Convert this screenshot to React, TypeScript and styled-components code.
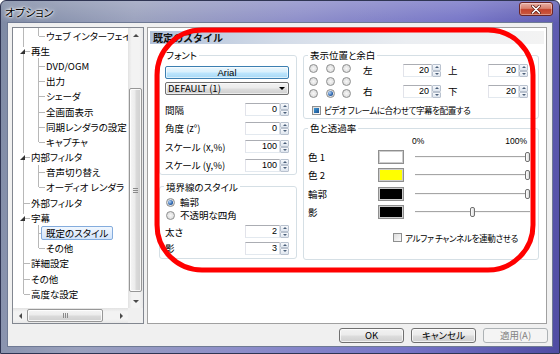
import React from "react";
import styled, { createGlobalStyle, css } from "styled-components";

const Global = createGlobalStyle`
  html, body { margin: 0; padding: 0; }
  body {
    width: 560px;
    height: 354px;
    overflow: hidden;
    background: #ffffff;
    font-family: "Noto Sans CJK JP", "Noto Sans", sans-serif;
    font-size: 9.5px;
    line-height: 1.2;
    font-feature-settings: "palt";
    color: #000;
  }
  *, *::before, *::after { box-sizing: border-box; }
`;

/* ---------- window frame ---------- */

const Window = styled.div`
  position: relative;
  width: 560px;
  height: 354px;
  display: flex;
  flex-direction: column;
  padding: 0 6px 6px 6px;
  border: 1px solid #2f3553;
  border-radius: 6px 6px 0 0;
  overflow: hidden;
  background:
    linear-gradient(180deg, rgba(255, 255, 255, 0.18) 0px, rgba(255, 255, 255, 0) 22px),
    linear-gradient(100deg, #7d89a3 0%, #9aa1bd 22%, #8d8ec9 48%, #7675c7 75%, #4f4ca3 100%);
`;

const TitleBar = styled.div`
  flex: none;
  height: 21px;
  display: flex;
  align-items: flex-start;
  justify-content: space-between;
`;

const Title = styled.div`
  margin-left: -2px;
  padding-top: 4px;
  font-size: 11px;
  line-height: 14px;
  color: #000;
  text-shadow: 0 0 6px #fff, 0 0 3px #fff, 0 0 2px #fff;
`;

const CloseButton = styled.div`
  margin-top: 1px;
  width: 34px;
  height: 14px;
  border: 1px solid #6b2525;
  border-radius: 3px;
  background: linear-gradient(180deg, #eab0a6 0%, #d9826f 45%, #c4432c 55%, #c95a40 100%);
  box-shadow: inset 0 0 0 1px rgba(255, 255, 255, 0.35);
  display: flex;
  align-items: center;
  justify-content: center;
`;

const Client = styled.div`
  flex: 1;
  display: flex;
  flex-direction: column;
  background: #f0f0f0;
  border: 1px solid #6f7a94;
  padding: 4px 5px 3px 4px;
`;

const Main = styled.div`
  height: 297px;
  display: flex;
  gap: 3px;
`;

/* ---------- tree ---------- */

const TreeBox = styled.div`
  width: 132px;
  flex: none;
  border: 1px solid #828790;
  background: #fff;
  display: grid;
  grid-template-columns: 1fr 15px;
  grid-template-rows: 1fr 15px;
  overflow: hidden;
`;

const TreeList = styled.div`
  overflow: hidden;
  padding-left: 3px;
`;

const TreeRow = styled.div`
  height: 15.2px;
  display: flex;
`;

type VLine = "full" | "top" | "none";

const Guide = styled.span<{ $v: VLine; $h?: boolean }>`
  position: relative;
  flex: none;
  width: 15px;
  &::before {
    content: "";
    position: absolute;
    left: 7px;
    top: 0;
    width: 0;
    height: ${(p) => (p.$v === "full" ? "100%" : p.$v === "top" ? "50%" : "0")};
    border-left: 1px solid #b8b8b8;
  }
  &::after {
    content: "";
    position: absolute;
    left: 8px;
    top: 50%;
    width: 6px;
    height: 0;
    border-top: 1px solid #b8b8b8;
    display: ${(p) => (p.$h ? "block" : "none")};
  }
`;

const Expander = styled.span`
  position: absolute;
  z-index: 1;
  left: 2px;
  top: 50%;
  margin-top: -4px;
  width: 7px;
  height: 7px;
  background: #fff;
  display: flex;
  align-items: flex-end;
  justify-content: flex-end;
  &::after {
    content: "";
    width: 0;
    height: 0;
    border-left: 5px solid transparent;
    border-bottom: 5px solid #333;
  }
`;

const NodeLabel = styled.span<{ $selected?: boolean }>`
  position: relative;
  z-index: 2;
  align-self: center;
  margin-left: -5px;
  padding: 0 4px;
  border: 1px solid transparent;
  border-radius: 2px;
  line-height: 12px;
  white-space: nowrap;
  ${(p) =>
    p.$selected &&
    css`
      border-color: #84acdd;
      background: linear-gradient(180deg, #f1f7fe 0%, #d2e4fb 100%);
    `}
`;

const VScroll = styled.div`
  display: flex;
  flex-direction: column;
  background: linear-gradient(90deg, #e2e2e2 0%, #f3f3f3 25%, #f3f3f3 75%, #e8e8e8 100%);
`;

const HScroll = styled.div`
  display: flex;
  background: linear-gradient(180deg, #e2e2e2 0%, #f3f3f3 25%, #f3f3f3 75%, #e8e8e8 100%);
`;

const ScrollCorner = styled.div`
  background: #f0f0f0;
`;

type Dir = "up" | "down" | "left" | "right";

const ArrowBox = styled.span<{ $dir: Dir }>`
  flex: none;
  width: ${(p) => (p.$dir === "left" || p.$dir === "right" ? "14px" : "auto")};
  height: ${(p) => (p.$dir === "up" || p.$dir === "down" ? "14px" : "auto")};
  display: flex;
  align-items: center;
  justify-content: center;
  &::after {
    content: "";
    width: 0;
    height: 0;
    ${(p) =>
      p.$dir === "up"
        ? css`border-left: 3px solid transparent; border-right: 3px solid transparent; border-bottom: 3px solid #4a4a4a;`
        : p.$dir === "down"
        ? css`border-left: 3px solid transparent; border-right: 3px solid transparent; border-top: 3px solid #4a4a4a;`
        : p.$dir === "left"
        ? css`border-top: 3px solid transparent; border-bottom: 3px solid transparent; border-right: 3px solid #4a4a4a;`
        : css`border-top: 3px solid transparent; border-bottom: 3px solid transparent; border-left: 3px solid #4a4a4a;`}
  }
`;

const VTrack = styled.div`
  flex: 1;
  display: flex;
  padding: 46px 1px 2px 1px;
`;

const HTrack = styled.div`
  flex: 1;
  display: flex;
  padding: 1px 11px 1px 0;
`;

const Thumb = styled.div<{ $vertical?: boolean }>`
  flex: 1;
  border: 1px solid #979797;
  border-radius: 2px;
  background: ${(p) =>
    p.$vertical
      ? "linear-gradient(90deg, #f5f5f5 0%, #ececec 45%, #dadada 55%, #d0d0d0 100%)"
      : "linear-gradient(180deg, #f5f5f5 0%, #ececec 45%, #dadada 55%, #d0d0d0 100%)"};
  box-shadow: inset 0 0 0 1px rgba(255, 255, 255, 0.8);
  display: flex;
  align-items: center;
  justify-content: center;
`;

const Grip = styled.span<{ $vertical?: boolean }>`
  display: flex;
  flex-direction: ${(p) => (p.$vertical ? "column" : "row")};
  gap: 1px;
  & > i {
    display: block;
    background: #8a8a8a;
    width: ${(p) => (p.$vertical ? "5px" : "1px")};
    height: ${(p) => (p.$vertical ? "1px" : "5px")};
  }
`;

/* ---------- right panel ---------- */

const Panel = styled.div`
  flex: 1;
  background: #fff;
  border: 1px solid #a0a0a0;
  display: flex;
  flex-direction: column;
  padding: 3px 2px 0 2px;
`;

const PageHeader = styled.div`
  height: 13px;
  padding-left: 3px;
  font-size: 10px;
  font-weight: bold;
  font-feature-settings: normal;
  line-height: 13px;
  color: #111;
  background: linear-gradient(90deg, #b1c1d9 0%, #d5dde9 35%, #ebeef2 65%, #f3f3f3 100%);
`;

const PageBody = styled.div`
  display: flex;
  gap: 6px;
  padding: 5px 5px 0 9px;
`;

const Column = styled.div<{ $w?: number; $gap: number }>`
  display: flex;
  flex-direction: column;
  gap: ${(p) => p.$gap}px;
  ${(p) => (p.$w ? `width: ${p.$w}px; flex: none;` : "flex: 1;")}
`;

const Group = styled.fieldset`
  margin: 0;
  padding: 0;
  min-width: 0;
  border: 1px solid #d5dfe5;
  border-radius: 3px;
`;

const Legend = styled.legend`
  margin-left: 4px;
  padding: 0 2px;
  line-height: 12px;
  height: 12px;
`;

const GroupBody = styled.div<{ $pad: string }>`
  display: flex;
  flex-direction: column;
  padding: ${(p) => p.$pad};
`;

const FontButton = styled.div`
  height: 13px;
  border: 1px solid #3c7fb1;
  border-radius: 2px;
  background: linear-gradient(180deg, #eaf6fd 0%, #d9f0fc 48%, #bee6fd 52%, #a7d9f5 100%);
  box-shadow: inset 0 0 0 1px rgba(255, 255, 255, 0.6);
  text-align: center;
  line-height: 11px;
  font-family: "Liberation Sans", Arial, sans-serif;
  font-size: 9.5px;
`;

const Combo = styled.div`
  margin-top: 3px;
  height: 13px;
  border: 1px solid #707070;
  border-radius: 2px;
  background: linear-gradient(180deg, #f2f2f2 0%, #ebebeb 48%, #dddddd 52%, #cfcfcf 100%);
  box-shadow: inset 0 0 0 1px rgba(255, 255, 255, 0.6);
  display: flex;
  align-items: center;
  justify-content: space-between;
  padding: 0 3px 0 2px;
  line-height: 11px;
  &::after {
    content: "";
    width: 0;
    height: 0;
    border-left: 3px solid transparent;
    border-right: 3px solid transparent;
    border-top: 3px solid #000;
  }
`;

const FieldRows = styled.div<{ $top: number; $gap: number }>`
  display: flex;
  flex-direction: column;
  margin-top: ${(p) => p.$top}px;
  gap: ${(p) => p.$gap}px;
`;

const FieldRow = styled.div`
  height: 13px;
  display: flex;
  align-items: center;
  justify-content: space-between;
  white-space: nowrap;
  line-height: 12px;
`;

const SpinWrap = styled.div<{ $w: number }>`
  flex: none;
  width: ${(p) => p.$w}px;
  height: 13px;
  display: flex;
`;

const SpinEdit = styled.div`
  flex: 1;
  border: 1px solid;
  border-color: #abadb3 #dbdfe6 #e3e9ef #e2e3ea;
  background: #fff;
  text-align: right;
  padding-right: 2px;
  line-height: 11px;
  font-family: "Liberation Sans", Arial, sans-serif;
  font-size: 9px;
`;

const SpinButtons = styled.div`
  width: 9px;
  flex: none;
  display: flex;
  flex-direction: column;
`;

const SpinButton = styled.span<{ $down?: boolean }>`
  flex: 1;
  border: 1px solid #b9c2cf;
  border-radius: 1px;
  background: linear-gradient(180deg, #f7f9fc 0%, #dfe6ef 100%);
  display: flex;
  align-items: center;
  justify-content: center;
  &::after {
    content: "";
    width: 0;
    height: 0;
    border-left: 2px solid transparent;
    border-right: 2px solid transparent;
    ${(p) => (p.$down ? "border-top: 2px solid #4c607a;" : "border-bottom: 2px solid #4c607a;")}
  }
`;

const RadioRow = styled.div`
  height: 13px;
  display: flex;
  align-items: center;
  gap: 5px;
  padding-left: 1px;
  line-height: 11px;
  white-space: nowrap;
`;

const RadioDot = styled.span<{ $checked?: boolean }>`
  flex: none;
  width: 9px;
  height: 9px;
  border-radius: 50%;
  border: 1px solid #8e8f8f;
  background: radial-gradient(circle at 50% 50%, #f7f7f7 0%, #e2e2e2 60%, #cfcfcf 100%);
  display: flex;
  align-items: center;
  justify-content: center;
  &::after {
    content: "";
    width: 5px;
    height: 5px;
    border-radius: 50%;
    background: radial-gradient(circle at 35% 35%, #b8d5f6 0%, #2a64ae 60%, #0e3467 100%);
    display: ${(p) => (p.$checked ? "block" : "none")};
  }
`;

const CheckBox = styled.span<{ $on?: boolean }>`
  flex: none;
  width: 9px;
  height: 9px;
  border: 1px solid #8e8f8f;
  background: linear-gradient(135deg, #dcdcdc 0%, #fbfbfb 100%);
  display: flex;
  align-items: center;
  justify-content: center;
  &::after {
    content: "";
    width: 5px;
    height: 5px;
    background: linear-gradient(135deg, #3d9ad8 0%, #1d4f8c 100%);
    display: ${(p) => (p.$on ? "block" : "none")};
  }
`;

const CheckRow = styled.div<{ $top: number; $left: number }>`
  height: 10px;
  margin-top: ${(p) => p.$top}px;
  margin-left: ${(p) => p.$left}px;
  display: flex;
  align-items: center;
  gap: 3px;
  white-space: nowrap;
  line-height: 10px;
`;

const CheckText = styled.span<{ $squeeze: number }>`
  font-size: 8.6px;
  letter-spacing: ${(p) => p.$squeeze}px;
`;

/* position group */

const PositionLayout = styled.div`
  display: flex;
`;

const RadioGrid = styled.div`
  display: grid;
  grid-template-columns: repeat(3, 9px);
  grid-auto-rows: 9px;
  column-gap: 7.5px;
  row-gap: 3.5px;
`;

const MarginGrid = styled.div`
  margin-left: 12px;
  display: grid;
  grid-template-columns: 40px 38px 47px 40px;
  grid-template-rows: 13px 13px;
  align-content: space-between;
`;

const MarginLabel = styled.span<{ $indent?: boolean }>`
  display: flex;
  align-items: center;
  padding-left: ${(p) => (p.$indent ? 7 : 0)}px;
`;

/* color group */

const ColorGrid = styled.div`
  display: grid;
  grid-template-columns: 70px 26px 1fr;
  align-items: center;
  line-height: 12px;
`;

const PercentScale = styled.div`
  display: flex;
  justify-content: space-between;
  padding: 0 11px 0 8px;
  font-family: "Liberation Sans", Arial, sans-serif;
  font-size: 8.5px;
  line-height: 10px;
`;

const ColorRows = styled.div`
  margin-top: 4px;
  display: flex;
  flex-direction: column;
  gap: 4.3px;
`;

const Swatch = styled.span<{ $color: string }>`
  width: 26px;
  height: 14px;
  border: 1px solid #8f8f8f;
  box-shadow: inset 0 0 0 1px #cdcdcd;
  background: ${(p) => p.$color};
`;

const SliderCell = styled.div`
  padding: 0 8px 0 11px;
`;

const SliderTrack = styled.div`
  position: relative;
  height: 2px;
  border-top: 1px solid #a6a6a6;
  border-bottom: 1px solid #f4f4f4;
`;

const SliderThumb = styled.span`
  position: absolute;
  top: -5px;
  width: 5px;
  height: 10px;
  border: 1px solid #707070;
  border-radius: 2px;
  background: linear-gradient(90deg, #ffffff 0%, #dcdcdc 100%);
`;

/* ---------- dialog buttons ---------- */

const ButtonRow = styled.div`
  margin-top: 4px;
  margin-right: -1px;
  height: 15px;
  display: flex;
  justify-content: flex-end;
  gap: 7px;
`;

const DialogButton = styled.div<{ $disabled?: boolean }>`
  width: 65px;
  height: 15px;
  border: 1px solid #707070;
  border-radius: 3px;
  background: linear-gradient(180deg, #f2f2f2 0%, #ebebeb 48%, #dddddd 52%, #cfcfcf 100%);
  box-shadow: inset 0 0 0 1px rgba(255, 255, 255, 0.7);
  text-align: center;
  line-height: 13px;
  ${(p) =>
    p.$disabled &&
    css`
      border-color: #adb2b5;
      background: #f4f4f4;
      box-shadow: none;
      color: #838383;
    `}
`;

/* ---------- annotation ---------- */

const Annotation = styled.svg`
  position: absolute;
  left: -1px;
  top: -1px;
  pointer-events: none;
`;

/* ---------- data ---------- */

type TreeNode = {
  label: string;
  c0: VLine;
  h0?: boolean;
  exp?: boolean;
  c1?: VLine;
  selected?: boolean;
};

const treeNodes: TreeNode[] = [
  { label: "ウェブ インターフェイス", c0: "full", c1: "top" },
  { label: "再生", c0: "full", h0: true, exp: true },
  { label: "DVD/OGM", c0: "full", c1: "full" },
  { label: "出力", c0: "full", c1: "full" },
  { label: "シェーダ", c0: "full", c1: "full" },
  { label: "全画面表示", c0: "full", c1: "full" },
  { label: "同期レンダラの設定", c0: "full", c1: "full" },
  { label: "キャプチャ", c0: "full", c1: "top" },
  { label: "内部フィルタ", c0: "full", h0: true, exp: true },
  { label: "音声切り替え", c0: "full", c1: "full" },
  { label: "オーディオ レンダラ", c0: "full", c1: "top" },
  { label: "外部フィルタ", c0: "full", h0: true },
  { label: "字幕", c0: "full", h0: true, exp: true },
  { label: "既定のスタイル", c0: "full", c1: "full", selected: true },
  { label: "その他", c0: "full", c1: "top" },
  { label: "詳細設定", c0: "full", h0: true },
  { label: "その他", c0: "full", h0: true },
  { label: "高度な設定", c0: "top", h0: true },
];

const fontFields = [
  { label: "間隔", value: 0 },
  { label: "角度 (z°)", value: 0 },
  { label: "スケール (x,%)", value: 100 },
  { label: "スケール (y,%)", value: 100 },
];

const colorRows = [
  { label: "色 1", color: "#ffffff", alpha: 255 },
  { label: "色 2", color: "#ffff00", alpha: 255 },
  { label: "輪郭", color: "#000000", alpha: 255 },
  { label: "影", color: "#000000", alpha: 128 },
];

/* ---------- parts ---------- */

function Spin({ value, width }: { value: number; width: number }) {
  return (
    <SpinWrap $w={width}>
      <SpinEdit>{value}</SpinEdit>
      <SpinButtons>
        <SpinButton />
        <SpinButton $down />
      </SpinButtons>
    </SpinWrap>
  );
}

function Tree() {
  return (
    <TreeBox>
      <TreeList>
        {treeNodes.map((n, i) => (
          <TreeRow key={i}>
            <Guide $v={n.c0} $h={n.h0}>
              {n.exp && <Expander />}
            </Guide>
            {n.c1 && <Guide $v={n.c1} $h />}
            <NodeLabel $selected={n.selected}>{n.label}</NodeLabel>
          </TreeRow>
        ))}
      </TreeList>
      <VScroll>
        <ArrowBox $dir="up" />
        <VTrack>
          <Thumb $vertical>
            <Grip $vertical>
              <i />
              <i />
              <i />
            </Grip>
          </Thumb>
        </VTrack>
        <ArrowBox $dir="down" />
      </VScroll>
      <HScroll>
        <ArrowBox $dir="left" />
        <HTrack>
          <Thumb>
            <Grip>
              <i />
              <i />
              <i />
            </Grip>
          </Thumb>
        </HTrack>
        <ArrowBox $dir="right" />
      </HScroll>
      <ScrollCorner />
    </TreeBox>
  );
}

export default function App() {
  const trackWidth = 115;
  const thumbWidth = 5;
  return (
    <>
      <Global />
      <Window>
        <TitleBar>
          <Title>オプション</Title>
          <CloseButton>
            <svg width="10" height="9" viewBox="0 0 10 9">
              <path d="M1.5 1 L8.5 8 M8.5 1 L1.5 8" stroke="#5a1b12" strokeWidth="3" strokeLinecap="round" />
              <path d="M1.5 1 L8.5 8 M8.5 1 L1.5 8" stroke="#ffffff" strokeWidth="1.6" strokeLinecap="round" />
            </svg>
          </CloseButton>
        </TitleBar>
        <Client>
          <Main>
            <Tree />
            <Panel>
              <PageHeader>既定のスタイル</PageHeader>
              <PageBody>
                <Column $w={138} $gap={6}>
                  <Group>
                    <Legend>フォント</Legend>
                    <GroupBody $pad="5px 7px 2px 5px">
                      <FontButton>Arial</FontButton>
                      <Combo>DEFAULT (1)</Combo>
                      <FieldRows $top={8} $gap={5.5}>
                        {fontFields.map((f) => (
                          <FieldRow key={f.label}>
                            <span>{f.label}</span>
                            <Spin value={f.value} width={44} />
                          </FieldRow>
                        ))}
                      </FieldRows>
                    </GroupBody>
                  </Group>
                  <Group>
                    <Legend>境界線のスタイル</Legend>
                    <GroupBody $pad="3px 7px 3px 5px">
                      <RadioRow>
                        <RadioDot $checked />
                        <span>輪郭</span>
                      </RadioRow>
                      <RadioRow>
                        <RadioDot />
                        <span>不透明な四角</span>
                      </RadioRow>
                      <FieldRows $top={3.5} $gap={3.5}>
                        <FieldRow>
                          <span>太さ</span>
                          <Spin value={2} width={44} />
                        </FieldRow>
                        <FieldRow>
                          <span>影</span>
                          <Spin value={3} width={44} />
                        </FieldRow>
                      </FieldRows>
                    </GroupBody>
                  </Group>
                </Column>
                <Column $gap={3}>
                  <Group>
                    <Legend>表示位置と余白</Legend>
                    <GroupBody $pad="3px 0 3px 5px">
                      <PositionLayout>
                        <RadioGrid>
                          {Array.from({ length: 9 }).map((_, i) => (
                            <RadioDot key={i} $checked={i === 7} />
                          ))}
                        </RadioGrid>
                        <MarginGrid>
                          <MarginLabel>左</MarginLabel>
                          <Spin value={20} width={38} />
                          <MarginLabel $indent>上</MarginLabel>
                          <Spin value={20} width={40} />
                          <MarginLabel>右</MarginLabel>
                          <Spin value={20} width={38} />
                          <MarginLabel $indent>下</MarginLabel>
                          <Spin value={20} width={40} />
                        </MarginGrid>
                      </PositionLayout>
                      <CheckRow $top={7} $left={3}>
                        <CheckBox $on />
                        <CheckText $squeeze={-0.5}>ビデオ フレームに合わせて字幕を配置する</CheckText>
                      </CheckRow>
                    </GroupBody>
                  </Group>
                  <Group>
                    <Legend>色と透過率</Legend>
                    <GroupBody $pad="2px 0 16px 4px">
                      <ColorGrid>
                        <span />
                        <span />
                        <PercentScale>
                          <span>0%</span>
                          <span>100%</span>
                        </PercentScale>
                      </ColorGrid>
                      <ColorRows>
                        {colorRows.map((c) => (
                          <ColorGrid key={c.label}>
                            <span>{c.label}</span>
                            <Swatch $color={c.color} />
                            <SliderCell>
                              <SliderTrack>
                                <SliderThumb
                                  style={{ left: `${Math.round((c.alpha / 255) * (trackWidth - thumbWidth))}px` }}
                                />
                              </SliderTrack>
                            </SliderCell>
                          </ColorGrid>
                        ))}
                      </ColorRows>
                      <CheckRow $top={14} $left={85}>
                        <CheckBox />
                        <CheckText $squeeze={-0.4}>アルファ チャンネルを連動させる</CheckText>
                      </CheckRow>
                    </GroupBody>
                  </Group>
                </Column>
              </PageBody>
            </Panel>
          </Main>
          <ButtonRow>
            <DialogButton>OK</DialogButton>
            <DialogButton>キャンセル</DialogButton>
            <DialogButton $disabled>適用(A)</DialogButton>
          </ButtonRow>
        </Client>
        <Annotation width="560" height="354" viewBox="0 0 560 354">
          <rect x="157" y="30" width="376" height="240" rx="45" ry="45" fill="none" stroke="#ff0000" strokeWidth="5" />
        </Annotation>
      </Window>
    </>
  );
}
